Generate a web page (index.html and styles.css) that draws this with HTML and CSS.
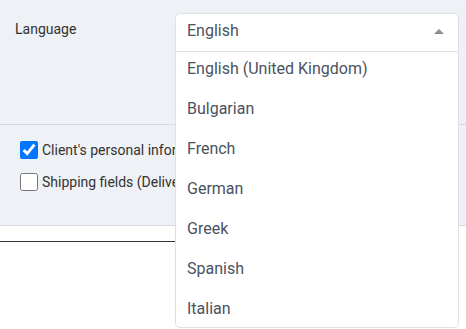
FILE: index.html
```html
<!DOCTYPE html>
<html lang="en">
<head>
<meta charset="utf-8">
<title>Language settings</title>
<link rel="stylesheet" href="styles.css">
</head>
<body>
  <div class="panel">
    <div class="field-label">Language</div>
    <div class="select-wrap">
      <div class="select">
        <span class="select-value">English</span>
        <span class="arrow"></span>
      </div>
      <ul class="menu">
        <li>English (United Kingdom)</li>
        <li>Bulgarian</li>
        <li>French</li>
        <li>German</li>
        <li>Greek</li>
        <li>Spanish</li>
        <li>Italian</li>
      </ul>
    </div>
  </div>
  <div class="options">
    <label class="check-row"><input type="checkbox" checked><span>Client's personal information</span></label>
    <label class="check-row"><input type="checkbox"><span>Shipping fields (Delivery address)</span></label>
  </div>
  <div class="rule"></div>
</body>
</html>
```
FILE: styles.css
```css
* { box-sizing: border-box; }
html, body { margin: 0; padding: 0; }
body {
  font-family: Roboto, "Liberation Sans", sans-serif;
  background: #fff;
  color: #333;
  min-height: 329px;
}
.panel {
  display: flex;
  background: #eef1f5;
  height: 125px;
  border-bottom: 1px solid #d7dadf;
  padding: 13px 0 0 15px;
}
.field-label {
  width: 160px;
  margin-top: 6px;
  font-size: 14px;
  line-height: 20px;
  color: #333;
}
.select-wrap {
  position: relative;
  width: 284px;
  z-index: 2;
}
.select {
  display: flex;
  justify-content: space-between;
  align-items: flex-start;
  height: 39px;
  background: #fff;
  border: 1px solid #dde1e6;
  border-radius: 5px 5px 0 0;
  padding: 7px 14px 0 11px;
}
.select-value {
  font-size: 16px;
  line-height: 20px;
  color: #4a5260;
}
.arrow {
  margin-top: 8px;
  width: 0;
  height: 0;
  border-left: 5px solid transparent;
  border-right: 5px solid transparent;
  border-bottom: 5px solid #8a8d91;
}
.menu {
  position: absolute;
  top: 39px;
  left: 0;
  width: 284px;
  height: 276px;
  margin: 0;
  padding: 0;
  list-style: none;
  background: #fff;
  border: 1px solid #dde1e6;
  border-top: 0;
  border-radius: 0 0 5px 5px;
  overflow: hidden;
}
.menu li {
  height: 40px;
  line-height: 34px;
  padding-left: 11px;
  font-size: 16px;
  color: #4a5260;
  white-space: nowrap;
}
.options {
  background: #eef1f5;
  height: 101px;
  border-bottom: 1px solid #d7dadf;
  padding: 16px 0 0 20px;
  display: flex;
  flex-direction: column;
  gap: 14px;
  overflow: hidden;
}
.check-row {
  display: flex;
  align-items: center;
  gap: 4px;
  font-size: 14px;
  line-height: 18px;
  color: #333;
  white-space: nowrap;
}
.check-row input {
  width: 18px;
  height: 18px;
  margin: 0;
}
.rule {
  margin-top: 15px;
  width: 180px;
  border-top: 1px solid #333;
}
```
